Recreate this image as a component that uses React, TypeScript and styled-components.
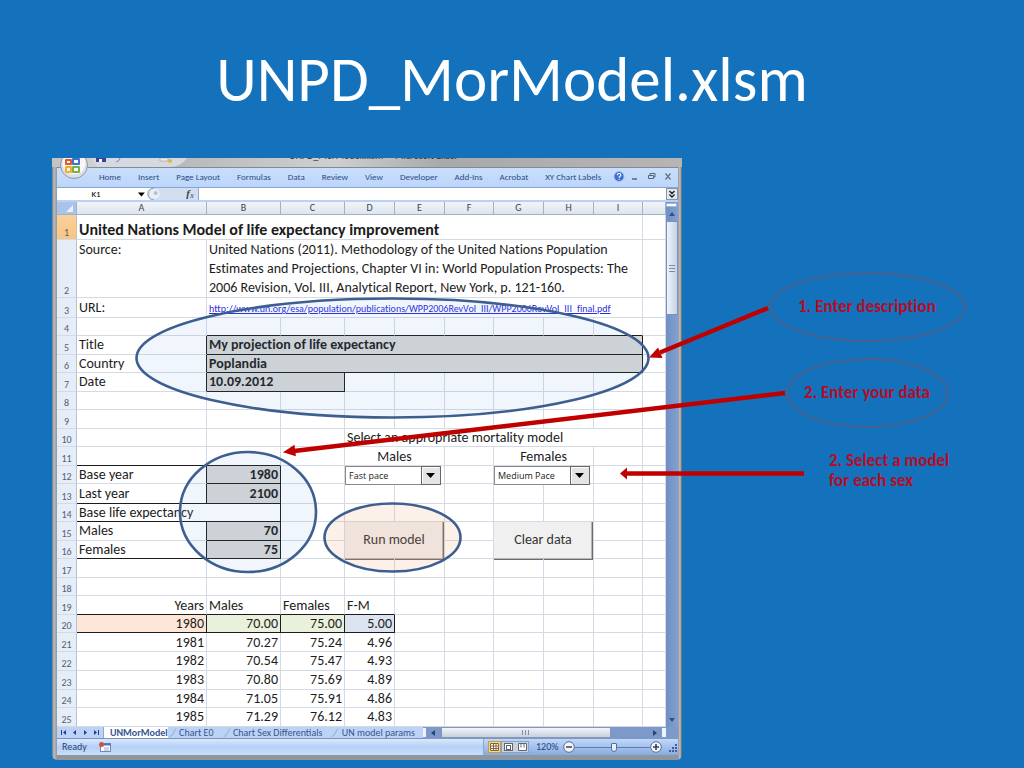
import React from "react";
import styled, { createGlobalStyle, css } from "styled-components";

const GlobalStyle = createGlobalStyle`
  *, *::before, *::after { box-sizing: border-box; }
  body { margin: 0; background: #1471bb; font-family: Carlito, Lato, sans-serif; font-variant-ligatures: none; }
  button, input, select { font: inherit; color: inherit; margin: 0; padding: 0; border: 0; background: none; border-radius: 0; }
`;

const LINE = "#d3dae6";
const INK = "#1c1c1c";
const UI_FONT = `Carlito, Lato, "Open Sans", sans-serif`;

const Slide = styled.main`
  min-height: 100vh;
  overflow: hidden;
`;

const Title = styled.h1`
  margin: 0;
  padding: 40px 16px 38px;
  color: #fff;
  font-size: 63px;
  line-height: 80px;
  font-weight: 400;
  text-align: center;
`;

const Stage = styled.div`
  position: relative;
  display: grid;
  grid-template-columns: minmax(0, 630fr) minmax(0, 290fr);
  padding: 0 52px;
`;

const Overlay = styled.svg`
  position: absolute;
  inset: 0;
  width: 100%;
  height: 100%;
  pointer-events: none;
`;

/* ---------- Excel window ---------- */

const Window = styled.section`
  display: flex;
  flex-direction: column;
  padding: 0 4px 5px 5px;
  border-radius: 0 0 5px 5px;
  background: linear-gradient(90deg, #6d7a85 0, #b9bec2 2px, #8f979d 5px, #8f979d 50%, #8e979e calc(100% - 4px), #c2c4c2 calc(100% - 2px), #565c62 100%);
  overflow: hidden;
`;

const TitleBar = styled.div`
  position: relative;
  height: 9px;
  margin: 0 -4px 0 -5px;
  background: linear-gradient(90deg, #c3c3c3, #dcdcdc 12%, #b9b9b9 20%, #cfcfcf 45%, #a9a9a9 62%, #b8b4b4);
  overflow: hidden;
`;

const Caption = styled.span`
  position: absolute;
  left: 237px;
  bottom: 5px;
  color: #2a2a2a;
  font: 10px/12px ${UI_FONT};
  white-space: pre;
`;

const QuickIcons = styled.svg`
  position: absolute;
  left: 40px;
  top: 0;
`;

const OfficeButton = styled.button`
  position: absolute;
  left: 60px;
  top: 0;
  width: 28px;
  height: 22px;
  overflow: hidden;
  svg { display: block; }
`;

const Ribbon = styled.nav`
  display: flex;
  align-items: center;
  justify-content: space-between;
  height: 20px;
  padding: 0 4px 2px 42px;
  border-top: 1px solid #7d8b9d;
  background: linear-gradient(#c9defa, #bcd6fb);
  color: #2c4a86;
  font: 9px/12px ${UI_FONT};
`;

const Menu = styled.div`
  display: flex;
  gap: 17px;
  white-space: nowrap;
`;

const WindowTools = styled.div`
  display: flex;
  align-items: center;
  flex: none;
`;

const FormulaBar = styled.div`
  display: flex;
  height: 15px;
  border-top: 1px solid #8aa5cd;
  border-bottom: 2px solid #b9d2f3;
  background: #fff;
  font: 9px/12px ${UI_FONT};
`;

const NameBox = styled.input`
  width: 78px;
  text-align: center;
`;

const FxBar = styled.div`
  display: flex;
  align-items: center;
  width: 64px;
  border-right: 1px solid #93abc9;
`;

const FormulaInput = styled.input`
  flex: 1;
  min-width: 0;
`;

const ExpandButton = styled.button`
  display: grid;
  place-items: center;
  width: 12px;
  border: 1px solid #8795a8;
  background: #dfe8f3;
`;

const SheetArea = styled.div`
  display: flex;
  height: 525px;
  background: #fff;
  overflow: hidden;
`;

const Grid = styled.table`
  flex: 1;
  min-width: 0;
  width: 100%;
  table-layout: fixed;
  border-collapse: separate;
  border-spacing: 0;
  color: ${INK};
  font-size: 14px;
  line-height: 16px;
  tbody tr { height: 18px; }
  tbody tr:nth-child(odd) { height: 19px; }
  tbody tr:nth-child(1) { height: 25px; }
  tbody tr:nth-child(2) { height: 58px; }
`;

const ColHead = styled.th`
  height: 13px;
  padding: 0;
  border-right: 1px solid #a3b1c6;
  border-bottom: 1px solid #a3b1c6;
  background: linear-gradient(#f2f5f9, #dde4ee);
  color: #3a4452;
  font: 10px/12px ${UI_FONT};
`;

const RowHead = styled.th<{ $active?: boolean }>`
  padding: 0;
  vertical-align: bottom;
  border-right: 1px solid #b4c1d6;
  border-bottom: 1px solid ${LINE};
  background: ${(p) => (p.$active ? "linear-gradient(#fad09a, #f8c583)" : "#e5edf9")};
  color: #55606f;
  font: 10px/12px ${UI_FONT};
`;

type CellProps = { $bold?: boolean; $num?: boolean; $center?: boolean; $fill?: string; $edge?: string };

const Cell = styled.td<CellProps>`
  padding: 1px 2px 0;
  border-right: 1px solid ${LINE};
  border-bottom: 1px solid ${LINE};
  white-space: nowrap;
  font-weight: ${(p) => (p.$bold ? 700 : 400)};
  text-align: ${(p) => (p.$num ? "right" : p.$center ? "center" : "left")};
  ${(p) => p.$fill && css`background: ${p.$fill};`}
  ${(p) => p.$edge?.includes("r") && css`border-right-color: ${INK};`}
  ${(p) => p.$edge?.includes("b") && css`border-bottom-color: ${INK};`}
`;

const HeadingCell = styled(Cell)`
  vertical-align: bottom;
  font-size: 16px;
  line-height: 18px;
  font-weight: 700;
`;

const SourceCell = styled(Cell)`
  padding-top: 0;
  vertical-align: top;
  line-height: 19px;
`;

const UrlCell = styled(Cell)`
  a { color: #2a2ae0; font-size: 10px; line-height: 14px; }
`;

const ControlCell = styled(Cell)`
  padding: 0;
  vertical-align: top;
`;

const SelectBox = styled.div`
  position: relative;
  width: 96px;
  height: 19px;
  margin-bottom: -2px;
  select {
    display: block;
    width: 100%;
    height: 19px;
    padding: 0 20px 0 3px;
    border: 1px solid #8a8a8a;
    background: #fff;
    color: #222;
    font: 9px/17px "Open Sans", sans-serif;
    appearance: none;
  }
  svg { position: absolute; right: 0; top: 0; pointer-events: none; }
`;

const SheetButton = styled.button`
  display: block;
  width: 99px;
  height: 38px;
  margin-bottom: -2px;
  border-right: 1px solid #6c6c6c;
  border-bottom: 1px solid #6c6c6c;
  box-shadow: inset -1px -1px #b5b5b5;
  background: #f0f0f0;
  color: #333;
  font-size: 14px;
`;

const VScroll = styled.div`
  display: flex;
  flex-direction: column;
  flex: 0 0 12px;
  background: linear-gradient(90deg, #6f90c4, #829fd0);
`;

const VThumb = styled.div`
  display: grid;
  place-items: center;
  height: 94px;
  border: 1px solid #7d93b5;
  background: linear-gradient(90deg, #eef3fa, #c5d2e6);
`;

const Spacer = styled.div`
  flex: 1;
`;

const TabBar = styled.div`
  display: flex;
  align-items: center;
  height: 12px;
  background: #bcd3f5;
  border-bottom: 1px solid #7793c2;
  color: #35568f;
  font: 10px/11px ${UI_FONT};
`;

const SheetTabs = styled.div`
  display: flex;
  flex: 1;
  min-width: 0;
  white-space: nowrap;
  align-items: center;
`;

const SheetTab = styled.button<{ $active?: boolean }>`
  display: flex;
  align-items: center;
  height: 11px;
  padding-right: 8px;
  ${(p) => p.$active && css`background: #fff; font-weight: 700; padding: 0 0 0 6px;`}
`;

const HScroll = styled.div`
  display: flex;
  align-items: center;
  justify-content: space-between;
  flex: none;
  width: 255px;
  height: 12px;
  padding-right: 11px;
  background: #7c99c9;
`;

const HThumb = styled.div`
  display: grid;
  place-items: center;
  width: 170px;
  height: 11px;
  margin-right: 36px;
  border: 1px solid #8797b2;
  background: linear-gradient(#f2f4f8, #c7d0de);
`;

const StatusBar = styled.footer`
  display: flex;
  align-items: center;
  height: 16px;
  padding-left: 5px;
  background: linear-gradient(#d9e8fc, #b5d0f6 50%, #c9defa);
  color: #2a4377;
  font: 10px/12px ${UI_FONT};
`;

const MacroButton = styled.button`
  display: flex;
  margin-left: 11px;
`;

const ZoomTools = styled.div`
  display: flex;
  align-items: center;
  height: 16px;
  margin-left: auto;
  padding-left: 4px;
  border-left: 1px solid #8ba7d2;
  background: linear-gradient(#c0d8f9, #88abdf);
  button, svg { display: block; }
`;

const ZoomLabel = styled.span`
  width: 20px;
  margin: 0 7px;
`;

const ZoomRange = styled.input`
  width: 75px;
  height: 12px;
  appearance: none;
  &::-webkit-slider-runnable-track { height: 1px; background: #5e7cac; }
  &::-webkit-slider-thumb {
    appearance: none;
    width: 6px;
    height: 9px;
    margin-top: -4px;
    border: 1px solid #56709b;
    border-radius: 1px 1px 3px 3px;
    background: #e6effb;
  }
`;

/* ---------- Notes beside the window ---------- */

const Notes = styled.aside`
  display: flex;
  flex-direction: column;
  align-items: center;
  padding: 114px 0 0 80px;
  color: #b50d26;
  font-size: 17px;
  line-height: 20px;
  font-weight: 700;
`;

const Callout = styled.div<{ $width: number }>`
  display: grid;
  place-items: center;
  width: ${(p) => p.$width}px;
  height: 70px;
  margin-bottom: 16px;
  border: 2px solid #4a618c;
  border-radius: 50%;
  white-space: nowrap;
`;

const PlainNote = styled.p`
  align-self: flex-start;
  width: 136px;
  margin: 7px 0 0 67px;
`;

const COLUMNS: [string, number][] = [
  ["A", 130], ["B", 74], ["C", 64], ["D", 50], ["E", 50], ["F", 49], ["G", 50], ["H", 50], ["I", 49], ["", 23],
];

const MENU = ["Home", "Insert", "Page Layout", "Formulas", "Data", "Review", "View", "Developer", "Add-Ins", "Acrobat", "XY Chart Labels"];

const RESULTS = [
  ["1981", "70.27", "75.24", "4.96"],
  ["1982", "70.54", "75.47", "4.93"],
  ["1983", "70.80", "75.69", "4.89"],
  ["1984", "71.05", "75.91", "4.86"],
  ["1985", "71.29", "76.12", "4.83"],
];

const GRAY = "#d8d8d6";

const Blank = ({ n, edge }: { n: number; edge?: string }) => (
  <>{Array.from({ length: n }, (_, i) => <Cell key={i} $edge={edge} />)}</>
);

function Row({ n, children }: { n: number; children: React.ReactNode }) {
  return (
    <tr>
      <RowHead scope="row" $active={n === 1}>{n}</RowHead>
      {children}
    </tr>
  );
}

function PaceSelect({ label, value }: { label: string; value: string }) {
  return (
    <SelectBox>
      <select aria-label={label} defaultValue={value}>
        <option>Fast pace</option>
        <option>Medium Pace</option>
        <option>Slow pace</option>
      </select>
      <svg width="20" height="19" viewBox="0 0 20 19">
        <rect x="0.5" y="0.5" width="19" height="18" fill="#e4e4e4" stroke="#666" />
        <path d="M1.5 17V1.5H18" fill="none" stroke="#fff" />
        <path d="M5 7h9l-4.500 5z" fill="#000" />
      </svg>
    </SelectBox>
  );
}

const TabDivider = () => (
  <svg width="14" height="11" viewBox="0 0 14 11">
    <path d="M2 10.500q3 0 4.500-4T10 .5" fill="none" stroke="#8ba4cc" />
  </svg>
);

function Sheet() {
  return (
    <Grid>
      <colgroup>
        <col style={{ width: 20 }} />
        {COLUMNS.map(([name, width]) => <col key={name} style={{ width }} />)}
      </colgroup>
      <thead>
        <tr>
          <ColHead aria-label="Select all">
            <svg width="19" height="12" viewBox="0 0 19 12" display="block">
              <rect width="19" height="12" fill="#a9c2ea" />
              <path d="M16 3v7H9z" fill="#e8f0fb" />
            </svg>
          </ColHead>
          {COLUMNS.map(([name]) => <ColHead key={name} scope="col">{name}</ColHead>)}
        </tr>
      </thead>
      <tbody>
        <Row n={1}><HeadingCell colSpan={9}>United Nations Model of life expectancy improvement</HeadingCell><Blank n={1} /></Row>
        <Row n={2}>
          <SourceCell>Source:</SourceCell>
          <SourceCell colSpan={8}>
            United Nations (2011). Methodology of the United Nations Population<br />
            Estimates and Projections, Chapter VI in: World Population Prospects: The<br />
            2006 Revision, Vol. III, Analytical Report, New York, p. 121-160.
          </SourceCell>
          <Blank n={1} />
        </Row>
        <Row n={3}>
          <Cell>URL:</Cell>
          <UrlCell colSpan={8}>
            <a href="http://www.un.org/esa/population/publications/WPP2006RevVol_III/WPP2006RevVol_III_final.pdf">
              http://www.un.org/esa/population/publications/WPP2006RevVol_III/WPP2006RevVol_III_final.pdf
            </a>
          </UrlCell>
          <Blank n={1} />
        </Row>
        <Row n={4}><Blank n={1} /><Blank n={8} edge="b" /><Blank n={1} /></Row>
        <Row n={5}><Cell $edge="r">Title</Cell><Cell colSpan={8} $bold $fill={GRAY} $edge="rb">My projection of life expectancy</Cell><Blank n={1} /></Row>
        <Row n={6}><Cell $edge="r">Country</Cell><Cell colSpan={8} $bold $fill={GRAY} $edge="rb">Poplandia</Cell><Blank n={1} /></Row>
        <Row n={7}><Cell $edge="r">Date</Cell><Cell colSpan={2} $bold $fill={GRAY} $edge="rb">10.09.2012</Cell><Blank n={7} /></Row>
        <Row n={8}><Blank n={10} /></Row>
        <Row n={9}><Blank n={10} /></Row>
        <Row n={10}><Blank n={3} /><Cell colSpan={6}>Select an appropriate mortality model</Cell><Blank n={1} /></Row>
        <Row n={11}>
          <Blank n={2} edge="b" /><Blank n={1} />
          <Cell colSpan={2} $center>Males</Cell><Blank n={1} />
          <Cell colSpan={2} $center>Females</Cell><Blank n={2} />
        </Row>
        <Row n={12}>
          <Cell $edge="r">Base year</Cell><Cell $num $bold $fill={GRAY} $edge="rb">1980</Cell><Blank n={1} />
          <ControlCell colSpan={2}><PaceSelect label="Males" value="Fast pace" /></ControlCell><Blank n={1} />
          <ControlCell colSpan={2}><PaceSelect label="Females" value="Medium Pace" /></ControlCell><Blank n={2} />
        </Row>
        <Row n={13}><Cell $edge="rb">Last year</Cell><Cell $num $bold $fill={GRAY} $edge="rb">2100</Cell><Blank n={8} /></Row>
        <Row n={14}><Cell colSpan={2} $edge="rb">Base life expectancy</Cell><Blank n={8} /></Row>
        <Row n={15}>
          <Cell $edge="r">Males</Cell><Cell $num $bold $fill={GRAY} $edge="rb">70</Cell><Blank n={1} />
          <ControlCell colSpan={2} rowSpan={2}><SheetButton>Run model</SheetButton></ControlCell><Blank n={1} />
          <ControlCell colSpan={2} rowSpan={2}><SheetButton>Clear data</SheetButton></ControlCell><Blank n={2} />
        </Row>
        <Row n={16}><Cell $edge="rb">Females</Cell><Cell $num $bold $fill={GRAY} $edge="rb">75</Cell><Blank n={4} /></Row>
        <Row n={17}><Blank n={10} /></Row>
        <Row n={18}><Blank n={10} /></Row>
        <Row n={19}>
          <Cell $num $edge="b">Years</Cell><Cell $edge="b">Males</Cell><Cell $edge="b">Females</Cell><Cell $edge="b">F-M</Cell><Blank n={6} />
        </Row>
        <Row n={20}>
          <Cell $num $fill="#fde6d8" $edge="rb">1980</Cell><Cell $num $fill="#e9f0dc" $edge="rb">70.00</Cell>
          <Cell $num $fill="#e9f0dc" $edge="rb">75.00</Cell><Cell $num $fill="#dbe4f0" $edge="rb">5.00</Cell><Blank n={6} />
        </Row>
        {RESULTS.map((r, i) => (
          <Row key={r[0]} n={21 + i}>
            {r.map((v) => <Cell key={v} $num>{v}</Cell>)}
            <Blank n={6} />
          </Row>
        ))}
      </tbody>
    </Grid>
  );
}

function ExcelWindow() {
  return (
    <Window aria-label="Microsoft Excel">
      <TitleBar>
        <QuickIcons width="100" height="9" viewBox="0 0 100 9">
          <path d="M0 0h95q-6 9-18 9H6Q2 6 0 0z" fill="#d6d9df" />
          <path d="M4 0h10v4H4z" fill="#33449b" /><path d="M7 1h3v3H7z" fill="#fff" />
          <path d="M28 0q0 3-4 4" fill="none" stroke="#6f86c4" />
          <path d="M68 0h8v3h-8z" fill="#eee" stroke="#888" strokeWidth=".5" /><circle cx="78" cy="3" r="2" fill="#dcb840" />
        </QuickIcons>
        <Caption>UNPD_MorModel.xlsm  -  Microsoft Excel</Caption>
      </TitleBar>
      <Ribbon>
        <Menu>
          {MENU.map((m) => <button key={m}>{m}</button>)}
        </Menu>
        <WindowTools>
          <svg width="64" height="14" viewBox="0 0 64 14">
            <circle cx="9" cy="6.500" r="5" fill="#3d6fd0" stroke="#a8c0ea" />
            <path d="M7.300 5.300q0-1.800 1.800-1.800t1.700 1.500q0 1-1.600 2v.8M9.200 8.800v1" fill="none" stroke="#fff" strokeWidth="1.200" />
            <path d="M22 9h5" stroke="#56657c" strokeWidth="1.500" />
            <path d="M38.500 5.500h5v3h-5zM40 5V3.500h5V7h-1" fill="none" stroke="#56657c" />
            <path d="M55.500 3.500l5 6m0-6l-5 6" stroke="#66758a" strokeWidth="1.300" />
          </svg>
        </WindowTools>
      </Ribbon>
      <FormulaBar>
        <NameBox aria-label="Name box" defaultValue="K1" />
        <FxBar>
          <svg width="64" height="12" viewBox="0 0 64 12">
            <path d="M3 4.500h7L6.500 8.500z" fill="#000" />
            <path d="M64 0H19a6 6 0 0 0 0 12h45z" fill="#d3dfef" />
            <path d="M19 0a6 6 0 0 0 0 12" fill="none" stroke="#8296b3" />
            <circle cx="20" cy="6" r="5" fill="#e9eff8" /><circle cx="21" cy="5" r="2" fill="#b4bfd0" />
            <text x="52" y="9" fontFamily="Liberation Serif, serif" fontStyle="italic" fontWeight="700" fontSize="11" fill="#3a4250">f</text>
            <text x="56" y="10" fontFamily="Liberation Serif, serif" fontStyle="italic" fontSize="8" fill="#3a4250">x</text>
          </svg>
        </FxBar>
        <FormulaInput aria-label="Formula" />
        <ExpandButton aria-label="Expand formula bar">
          <svg width="8" height="9" viewBox="0 0 8 9"><path d="M1.500 1l2.500 2.500L6.500 1M1.500 4.500L4 7l2.500-2.500" fill="none" stroke="#222" strokeWidth="1.400" /></svg>
        </ExpandButton>
      </FormulaBar>
      <SheetArea>
        <Sheet />
        <VScroll>
          <svg width="12" height="19" viewBox="0 0 12 19">
            <rect x="0.500" y="1.500" width="10" height="3" fill="#fff" stroke="#9ab5de" />
            <path d="M3 14l3-4 3 4z" fill="#35507f" />
          </svg>
          <VThumb><svg width="6" height="7" viewBox="0 0 6 7"><path d="M0 .5h6M0 3.500h6M0 6.500h6" stroke="#7b8ba5" /></svg></VThumb>
          <Spacer />
          <svg width="12" height="12" viewBox="0 0 12 12"><path d="M3 3h6L6 7z" fill="#35507f" /></svg>
        </VScroll>
      </SheetArea>
      <TabBar>
        <svg width="47" height="11" viewBox="0 0 47 11">
          <path d="M4.500 3v5M41.500 3v5" stroke="#1c4390" />
          <path d="M9 3v5L6 5.500zM19 3v5l-3-2.500zM27 3v5l3-2.500zM37 3v5l3-2.500z" fill="#1c4390" />
          <path d="M46.500 0v11" stroke="#8fa9d2" />
        </svg>
        <SheetTabs>
          <SheetTab $active>UNMorModel</SheetTab>
          <TabDivider />
          <SheetTab>Chart E0</SheetTab>
          <TabDivider />
          <SheetTab>Chart Sex Differentials</SheetTab>
          <TabDivider />
          <SheetTab>UN model params</SheetTab>
        </SheetTabs>
        <HScroll>
          <svg width="15" height="12" viewBox="0 0 15 12"><rect x="0" y="1" width="3" height="9" fill="#eef4fc" /><path d="M12 3v6L8 6z" fill="#28457b" /></svg>
          <HThumb><svg width="7" height="5" viewBox="0 0 7 5"><path d="M.5 0v5M3.500 0v5M6.500 0v5" stroke="#8090a8" /></svg></HThumb>
          <svg width="18" height="12" viewBox="0 0 18 12"><path d="M4 3v6l4-3z" fill="#28457b" /><rect x="13" y="1" width="4" height="9" fill="#eef4fc" /></svg>
        </HScroll>
      </TabBar>
      <StatusBar>
        <span>Ready</span>
        <MacroButton aria-label="Record macro">
          <svg width="14" height="12" viewBox="0 0 14 12">
            <rect x="2.500" y="2.500" width="10" height="8" fill="#fff" stroke="#6f87b5" />
            <path d="M2.500 3.500h10" stroke="#4f74c0" strokeWidth="2" /><path d="M6 7h5M6 9h5" stroke="#98aac8" />
            <circle cx="3.500" cy="3.500" r="2.500" fill="#d2543a" />
          </svg>
        </MacroButton>
        <ZoomTools>
          <svg width="41" height="14" viewBox="0 0 41 14">
            <rect x="0.500" y="1.500" width="12" height="11" fill="#fbd68a" stroke="#c59b4d" />
            <path d="M2.500 3.500h8v7h-8zM2.500 6h8M2.500 8.500h8M5.500 3.500v7M8 3.500v7" fill="#fff" stroke="#7c6a44" />
            <rect x="13.500" y="1.500" width="27" height="11" fill="#c9d2de" stroke="#8ca0bf" />
            <rect x="16.500" y="3.500" width="8" height="7" fill="#fff" stroke="#5c6675" /><rect x="18.500" y="5.500" width="4" height="4" fill="#fff" stroke="#5c6675" />
            <path d="M30.500 3.500h8v7h-8zM33 3.500v4M36 3.500v4" fill="#fff" stroke="#5c6675" />
          </svg>
          <ZoomLabel>120%</ZoomLabel>
          <button aria-label="Zoom out">
            <svg width="12" height="12" viewBox="0 0 12 12"><circle cx="6" cy="6" r="5.300" fill="#f1f5fb" stroke="#5a6f94" /><path d="M3 6h6" stroke="#33435f" strokeWidth="1.600" /></svg>
          </button>
          <ZoomRange type="range" aria-label="Zoom" defaultValue="52" />
          <button aria-label="Zoom in">
            <svg width="12" height="12" viewBox="0 0 12 12"><circle cx="6" cy="6" r="5.300" fill="#f1f5fb" stroke="#5a6f94" /><path d="M3 6h6M6 3v6" stroke="#33435f" strokeWidth="1.600" /></svg>
          </button>
          <svg width="16" height="14" viewBox="0 0 16 14"><path d="M13 5h2M10 8h2M13 8h2M7 11h2M10 11h2M13 11h2" stroke="#3f5f99" strokeWidth="2" /></svg>
        </ZoomTools>
      </StatusBar>
    </Window>
  );
}

export default function App() {
  return (
    <>
      <GlobalStyle />
      <Slide>
        <Title>UNPD_MorModel.xlsm</Title>
        <Stage>
          <ExcelWindow />
          <Notes>
            <Callout $width={197}>1. Enter description</Callout>
            <Callout $width={163}>2. Enter your data</Callout>
            <PlainNote>2. Select a model for each sex</PlainNote>
          </Notes>
          <OfficeButton aria-label="Office button">
            <svg width="28" height="22" viewBox="0 0 28 22">
              <circle cx="14" cy="7" r="13.500" fill="#dcdfe5" stroke="#8f98a6" />
              <circle cx="14" cy="5" r="11.500" fill="#f7f7f8" />
              <g fill="none" strokeWidth="2" strokeLinejoin="round">
                <path d="M6 2v4h5V2z" stroke="#e2582a" />
                <path d="M13 1h6v5h-6z" stroke="#3a74c8" />
                <path d="M13 9h6v5h-6z" stroke="#7ab24a" />
                <path d="M6 9h5v5H6z" stroke="#f2ae2c" />
              </g>
            </svg>
          </OfficeButton>
          <Overlay viewBox="0 158 1024 602" preserveAspectRatio="none" aria-hidden="true">
            <g stroke="#3d5f8f" strokeWidth="2.600">
              <ellipse cx="392.500" cy="358" rx="256" ry="59.500" fill="rgba(100,150,225,.09)" />
              <ellipse cx="248" cy="512" rx="68" ry="60" fill="rgba(100,150,225,.09)" />
              <ellipse cx="392.500" cy="537.500" rx="68" ry="34" fill="rgba(235,150,90,.14)" />
            </g>
            <g stroke="#c00000" strokeWidth="4.500" fill="#c00000">
              <path d="M768 308L660 352.500M785 393L294 451M804 473.500H626" fill="none" />
              <path d="M649 357.500l9-10 4.500 10.500zM283 452.200l11.500-7.500 1.400 11.500zM620 473.500l7-6v12z" stroke="none" />
            </g>
          </Overlay>
        </Stage>
      </Slide>
    </>
  );
}
